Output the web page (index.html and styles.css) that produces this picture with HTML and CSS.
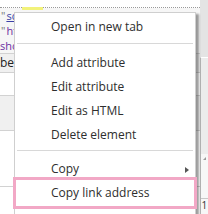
FILE: index.html
```html
<!DOCTYPE html>
<html>
<head>
<meta charset="utf-8">
<link rel="stylesheet" href="styles.css">
</head>
<body>
<div class="page">
  <div class="left">
    <div class="top"></div>
    <div class="code">
      <div class="line l1"><span class="q">"</span><span class="link">sc</span></div>
      <div class="line l2"><span class="q">"</span>ht</div>
      <div class="line l3">sho</div>
    </div>
    <div class="row grey">be</div>
    <div class="row white h22"></div>
    <div class="row grey h34"></div>
    <div class="row white h55"></div>
    <div class="row white"></div>
  </div>
  <div class="right">
    <div class="r-top"></div>
    <div class="r-mid"></div>
    <div class="r-scroll">
      <div class="tri"></div>
      <div class="r-num">1</div>
    </div>
  </div>
</div>
<div class="hl"></div>

<div class="menu">
  <div class="item">Open in new tab</div>
  <div class="sep first"></div>
  <div class="item">Add attribute</div>
  <div class="item">Edit attribute</div>
  <div class="item">Edit as HTML</div>
  <div class="item">Delete element</div>
  <div class="sep second"></div>
  <div class="item sub">Copy<span class="arrow"></span></div>
  <div class="item">Copy link address</div>
</div>
<div class="mark"></div>
</body>
</html>
```

FILE: styles.css
```css
html, body {
  margin: 0;
  padding: 0;
}
body {
  width: 208px;
  height: 214px;
  overflow: hidden;
  position: relative;
  background: #fff;
  font-family: "Open Sans", "Noto Sans", sans-serif;
}
.page {
  display: flex;
  height: 214px;
}
.left {
  flex: 1;
  display: flex;
  flex-direction: column;
  overflow: hidden;
}
.top {
  height: 7px;
  background: #fff;
  border-bottom: 1px dotted #9a9a9a;
  flex: none;
}
.code {
  height: 45px;
  background: #f6f6f6;
  flex: none;
  font-family: "Open Sans", sans-serif;
  font-size: 11px;
  white-space: nowrap;
  overflow: hidden;
}
.hl {
  position: absolute;
  left: 22px;
  top: 7px;
  width: 21px;
  height: 3px;
  background: #f2f27a;
}
.line {
  height: 15px;
  line-height: 15px;
}
.l1 { color: #3b3fa6; padding-left: 1px; }
.l2 { color: #6b2fa0; padding-left: 1px; }
.l3 { color: #6b2fa0; }
.line .q {
  color: #777;
  margin-right: 1px;
}
.link {
  text-decoration: underline;
}
.row {
  flex: none;
  border-top: 1px solid #d2d2d2;
  height: 18px;
  font-size: 12px;
  line-height: 18px;
  color: #222;
  white-space: nowrap;
  overflow: hidden;
}
.grey {
  background: #f0f0f0;
}
.white {
  background: #fff;
}
.h22 { height: 22px; }
.h34 { height: 34px; }
.h55 { height: 55px; }

.right {
  width: 8px;
  display: flex;
  flex-direction: column;
  flex: none;
}
.r-top {
  height: 57px;
  background: #e4e4e4;
}
.r-mid {
  height: 96px;
  border-top: 1px solid #fff;
  border-left: 1px solid #b5b5b5;
  background: #ececec;
}
.r-scroll {
  flex: 1;
  border-left: 1px solid #b5b5b5;
  background: #f7f7f7;
  display: flex;
  flex-direction: column;
  align-items: center;
}
.tri {
  margin-top: 3px;
  width: 0;
  height: 0;
  border-left: 3px solid transparent;
  border-bottom: 3px solid #9a9a9a;
}
.r-num {
  margin-top: 38px;
  border-top: 1px solid #c8c8c8;
  width: 100%;
  font-size: 10px;
  line-height: 12px;
  color: #333;
  padding-left: 1px;
}

.menu {
  position: absolute;
  left: 14px;
  top: 12px;
  width: 182px;
  height: 202px;
  background: #fff;
  border: 1px solid #cfcfcf;
  border-bottom: none;
  box-shadow: 3px 2px 2px rgba(0, 0, 0, 0.38);
  padding-top: 2px;
  box-sizing: border-box;
  font-size: 12px;
  color: #2e2e2e;
}
.item {
  height: 24px;
  line-height: 24px;
  padding-left: 36px;
  position: relative;
  white-space: nowrap;
}
.sep {
  height: 1px;
  background: #d8d8d8;
  margin: 4px 2px 7px 2px;
}
.sep.second {
  margin: 3px 2px 6px 2px;
}
.arrow {
  position: absolute;
  right: 6px;
  top: 10px;
  width: 0;
  height: 0;
  border-top: 3.5px solid transparent;
  border-bottom: 3.5px solid transparent;
  border-left: 4px solid #555;
}
.mark {
  position: absolute;
  left: 13px;
  top: 177px;
  width: 184px;
  height: 32px;
  box-sizing: border-box;
  border: 3px solid #f2a8c6;
}
```
